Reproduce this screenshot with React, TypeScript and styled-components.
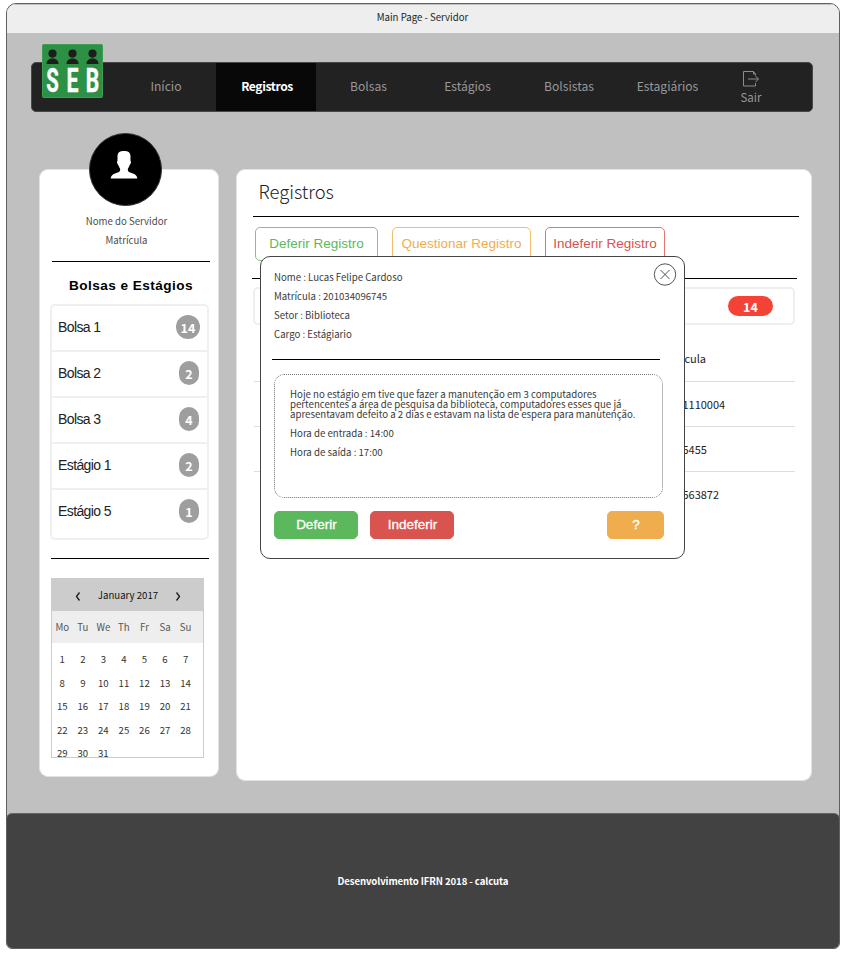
import React from "react";
import styled, { createGlobalStyle } from "styled-components";

const sans = `"Noto Sans CJK SC", "Noto Sans", sans-serif`;
const arial = `"Liberation Sans", Arial, sans-serif`;

const GlobalStyle = createGlobalStyle`
  *, *::before, *::after { box-sizing: border-box; }
  body { margin: 0; background: #fff; font-family: ${sans}; color: #333; }
  button { margin: 0; padding: 0; font: inherit; background: none; border: 0; }
`;

const Page = styled.div`
  width: 849px;
  height: 956px;
  padding: 3px 9px 0 6px;
  overflow: hidden;
`;

const Window = styled.div`
  width: 834px;
  height: 946px;
  display: flex;
  flex-direction: column;
  background: #c0c0c0;
  border: 1px solid #606060;
  border-radius: 10px 10px 6px 6px;
  overflow: hidden;
`;

const TitleBar = styled.header`
  flex: none;
  height: 29px;
  background: #eee;
  border-top: 1px solid #c4c4c4;
  text-align: center;
  font-size: 9.65px;
  line-height: 25px;
  color: #222;
  padding-right: 1px;
`;

const Navbar = styled.nav`
  flex: none;
  display: flex;
  width: 782px;
  height: 50px;
  margin: 29px 0 0 24px;
  background: #222;
  border: 1px solid #484848;
  border-radius: 5px;
`;

const Brand = styled.div`
  width: 84px;
  padding-left: 10px;

  svg { display: block; margin-top: -19px; }
`;

const NavItem = styled.a<{ $width: number; $active?: boolean }>`
  width: ${(p) => p.$width}px;
  height: 48px;
  padding-left: ${(p) => (p.$active ? 2 : 0)}px;
  line-height: 45px;
  text-align: center;
  font-size: 12.1px;
  letter-spacing: ${(p) => (p.$active ? "-0.4px" : "0")};
  font-weight: ${(p) => (p.$active ? 700 : 400)};
  color: ${(p) => (p.$active ? "#fff" : "#999")};
  background: ${(p) => (p.$active ? "#080808" : "transparent")};
`;

const Logout = styled.a`
  width: 80px;
  padding: 8px 0 0;
  display: flex;
  flex-direction: column;
  align-items: center;
  font-size: 11.5px;
  line-height: 19px;
  color: #999;
`;

const Columns = styled.main`
  flex: none;
  display: flex;
  align-items: flex-start;
  gap: 17px;
  height: 701px;
  padding: 57px 0 0 32px;
`;

const Sidebar = styled.aside`
  width: 180px;
  height: 608px;
  background: #fff;
  border: 1px solid #e2e2e2;
  border-radius: 9px;
  padding: 0 9px 0 11px;
`;

const Avatar = styled.div`
  width: 73px;
  height: 73px;
  margin: -37px 0 0 38px;
  border-radius: 50%;
  background: #000;
  border: 1px solid #333;

  svg { display: block; margin: 16px 0 0 20px; }
`;

const Profile = styled.div`
  height: 55px;
  padding: 6px 7px 0 0;
  text-align: center;
  font-size: 9.65px;
  line-height: 19px;
  color: #4a4a4a;
`;

const Rule = styled.hr<{ $width: number; $left?: number; $top?: number }>`
  width: ${(p) => p.$width}px;
  height: 1px;
  margin: ${(p) => p.$top ?? 0}px 0 0 ${(p) => p.$left ?? 0}px;
  border: 0;
  background: #000;
`;

const SideTitle = styled.h2`
  margin: 14px 0 9px;
  padding-left: 18px;
  font: bold 13.6px/19px ${arial};
  letter-spacing: 0.45px;
  color: #000;
  white-space: nowrap;
`;

const List = styled.ul`
  width: 159px;
  height: 236px;
  margin: 0 0 0 -1px;
  padding: 0;
  list-style: none;
  border: 2px solid #efefef;
  border-radius: 5px;
`;

const ListItem = styled.li`
  height: 46px;
  padding: 0 6px 2px;
  display: flex;
  align-items: center;
  justify-content: space-between;
  font: 14px/20px ${arial};
  letter-spacing: -0.6px;
  color: #222;

  &:first-child { height: 44px; }
  & + & { border-top: 2px solid #efefef; }
`;

const Count = styled.span<{ $wide?: boolean }>`
  width: ${(p) => (p.$wide ? 24 : 20)}px;
  height: 24px;
  margin-right: ${(p) => (p.$wide ? 1 : 2)}px;
  border-radius: 12px;
  background: #9e9e9e;
  color: #fff;
  text-align: center;
  font: bold 12.5px/25px ${sans};
  letter-spacing: 0;
`;

const Calendar = styled.section`
  width: 153px;
  height: 180px;
  margin-top: 19px;
  border: 1px solid #ccc;
  overflow: hidden;
  font-size: 9.65px;
`;

const MonthBar = styled.div`
  height: 32px;
  display: flex;
  align-items: center;
  padding: 2px 22px 0 23px;
  justify-content: space-between;
  background: #ccc;
  color: #111;

  span { margin-top: -2px; }
`;

const WeekRow = styled.div<{ $head?: boolean }>`
  height: ${(p) => (p.$head ? 32 : 23.5)}px;
  line-height: ${(p) => (p.$head ? 32 : 23.5)}px;
  display: grid;
  grid-template-columns: repeat(7, 20.55px);
  text-align: center;
  background: ${(p) => (p.$head ? "#eee" : "#fff")};
  color: ${(p) => (p.$head ? "#555" : "#333")};
`;

const Days = styled.div`
  padding-top: 5px;
`;

const Panel = styled.section`
  position: relative;
  width: 576px;
  height: 612px;
  background: #fff;
  border: 1px solid #e2e2e2;
  border-radius: 9px;
  padding-left: 16px;
`;

const PanelTitle = styled.h1`
  margin: 0;
  height: 46px;
  padding-left: 5.5px;
  font-size: 18.4px;
  font-weight: 300;
  line-height: 42px;
  color: #222;
`;

const Actions = styled.div`
  display: flex;
  gap: 14px;
  margin: 10px 0 0 2px;
`;

const OutlineButton = styled.button<{ $width: number; $color: string; $border: string }>`
  width: ${(p) => p.$width}px;
  height: 34px;
  border: 1px solid ${(p) => p.$border};
  border-radius: 5px;
  color: ${(p) => p.$color};
  font: 13.5px/30px ${arial};
  white-space: nowrap;
`;

const SummaryBar = styled.div`
  width: 542px;
  height: 38px;
  margin-top: 8px;
  padding: 8px 20px 0 0;
  display: flex;
  justify-content: flex-end;
  border: 2px solid #efefef;
  border-radius: 5px;
`;

const RedPill = styled.span`
  width: 45px;
  height: 20px;
  margin-top: -1px;
  border-radius: 10px;
  background: #f44336;
  color: #fff;
  text-align: center;
  font-size: 12.5px;
  font-weight: 700;
  line-height: 21px;
`;

const Records = styled.div`
  width: 541px;
  margin: 11px 0 0 1px;
`;

const Record = styled.div`
  height: 45px;
  padding-left: 404px;
  line-height: 44px;
  font-size: 11px;
  color: #222;

  &:first-child { line-height: 45px; }
  & + & { border-top: 1px solid #ddd; }
`;

const Modal = styled.div`
  position: absolute;
  left: 23px;
  top: 86px;
  width: 425px;
  height: 303px;
  padding: 11px 12px 0 11px;
  background: #fff;
  border: 1px solid #444;
  border-radius: 10px;
`;

const CloseButton = styled.button`
  position: absolute;
  right: 7px;
  top: 5px;
  width: 24px;
  height: 24px;

  svg { display: block; }
`;

const Details = styled.div`
  height: 91px;
  padding-left: 2px;
  font-size: 9.65px;
  line-height: 19px;
  color: #3a3a3a;
`;

const Note = styled.div`
  width: 389px;
  height: 124px;
  margin: 14px 0 0 2px;
  border: 1px dotted #777;
  border-radius: 10px;
  padding: 14px 0 0 15px;
  font-size: 9.67px;
  line-height: 10px;
  color: #3a3a3a;
  white-space: nowrap;

  p { margin: 0 0 9px; }
`;

const ModalActions = styled.div`
  display: flex;
  gap: 12px;
  margin: 13px 0 0 2.4px;
`;

const SolidButton = styled.button<{ $width: number; $color: string; $push?: boolean }>`
  width: ${(p) => p.$width}px;
  height: 28px;
  margin-left: ${(p) => (p.$push ? "141px" : "0")};
  border-radius: 5px;
  background: ${(p) => p.$color};
  border: 1px solid ${(p) => p.$color};
  color: #fff;
  font: 13.5px/26px ${arial};
  -webkit-text-stroke: 0.3px #fff;
`;

const Footer = styled.footer`
  flex: 1;
  margin: 0 -1px -1px;
  background: #424242;
  border: 1px solid #666;
  border-radius: 6px;
  text-align: center;
  font-size: 9.6px;
  font-weight: 700;
  letter-spacing: -0.1px;
  line-height: 134px;
  color: #fff;
`;

const Logo = () => (
  <svg width="61" height="54" viewBox="0 0 61 54">
    <rect x="0.5" y="0.5" width="60" height="53" rx="1" fill="#2c9145" stroke="#3f9d57" />
    {[10.5, 30.5, 50.5].map((x) => (
      <g key={x} fill="#1d1d1b">
        <circle cx={x} cy="9.600" r="4.100" />
        <path d={`M${x - 6} 20c0-4 3-5.500 6-5.500s6 1.500 6 5.500z`} />
      </g>
    ))}
    <g fill="#fff" stroke="#fff" strokeWidth="0.400" fontFamily="Roboto" fontWeight="700" fontSize="33.500">
      <text x="4.200" y="48" textLength="12.500" lengthAdjust="spacingAndGlyphs">S</text>
      <text x="24.600" y="48" textLength="12" lengthAdjust="spacingAndGlyphs">E</text>
      <text x="43.800" y="48" textLength="13.500" lengthAdjust="spacingAndGlyphs">B</text>
    </g>
  </svg>
);

const ExitIcon = () => (
  <svg width="17" height="17" viewBox="0 0 17 17" fill="none" stroke="#8c8c8c">
    <path d="M12.500 4.500V3L10.500 .5H0.500v14.500h12v-3M5 8h10.500M12.500 5l3 3-3 3M10.500 .5v2.500h2" />
  </svg>
);

const PersonIcon = () => (
  <svg width="28" height="30" viewBox="0 0 28 30">
    <path
      fill="#fff"
      d="M14 1c3.800 0 6.500 1.200 6.500 5.200v4.300c0 .8.800 1 .3 2.700-.4 1.400-1 1.300-1.400 2.500-.4 1.400-1.600 2.500-1.600 3.500 0 3.300 2.700 3.100 5.200 4.300 2.400 1.100 4.300 2.300 4.300 5H.7c0-2.700 1.900-3.900 4.300-5 2.500-1.200 5.200-1 5.200-4.300 0-1-1.200-2.100-1.600-3.500-.4-1.200-1-1.100-1.400-2.500-.5-1.700.3-1.900.3-2.700V6.200C7.500 2.200 10.200 1 14 1z"
    />
  </svg>
);

const Chevron = ({ d }: { d: string }) => (
  <svg width="6" height="9" viewBox="0 0 6 9" fill="none" stroke="#222" strokeWidth="1.400">
    <path d={d} />
  </svg>
);

const CloseIcon = () => (
  <svg width="24" height="24" viewBox="0 0 24 24" fill="none" stroke="#555">
    <circle cx="12" cy="12.500" r="10.700" />
    <path d="M7.500 8l9 9M16.500 8l-9 9" />
  </svg>
);

const navItems = [
  { label: "Início", width: 100 },
  { label: "Registros", width: 100, active: true },
  { label: "Bolsas", width: 105 },
  { label: "Estágios", width: 93 },
  { label: "Bolsistas", width: 110 },
  { label: "Estagiários", width: 87 },
];

const grants: [string, number][] = [
  ["Bolsa 1", 14],
  ["Bolsa 2", 2],
  ["Bolsa 3", 4],
  ["Estágio 1", 2],
  ["Estágio 5", 1],
];

const weekdays = ["Mo", "Tu", "We", "Th", "Fr", "Sa", "Su"];
const weeks = [0, 1, 2, 3, 4].map((w) =>
  [1, 2, 3, 4, 5, 6, 7].map((d) => w * 7 + d).filter((d) => d <= 31)
);

const records = ["Matrícula", "20111110004", "20155455", "2015563872"];

export default function App() {
  return (
    <Page>
      <GlobalStyle />
      <Window>
        <TitleBar>Main Page - Servidor</TitleBar>
        <Navbar>
          <Brand><Logo /></Brand>
          {navItems.map((n) => (
            <NavItem key={n.label} $width={n.width} $active={n.active}>{n.label}</NavItem>
          ))}
          <Logout><ExitIcon />Sair</Logout>
        </Navbar>
        <Columns>
          <Sidebar>
            <Avatar><PersonIcon /></Avatar>
            <Profile>
              <div>Nome do Servidor</div>
              <div>Matrícula</div>
            </Profile>
            <Rule $width={158} $left={1} />
            <SideTitle>Bolsas e Estágios</SideTitle>
            <List>
              {grants.map(([label, count]) => (
                <ListItem key={label}>
                  {label}
                  <Count $wide={count > 9}>{count}</Count>
                </ListItem>
              ))}
            </List>
            <Rule $width={158} $top={18} />
            <Calendar>
              <MonthBar>
                <Chevron d="M4.500 .5L1.500 4.500l3 4" />
                <span>January 2017</span>
                <Chevron d="M1.500 .5l3 4-3 4" />
              </MonthBar>
              <WeekRow $head>{weekdays.map((d) => <span key={d}>{d}</span>)}</WeekRow>
              <Days>
                {weeks.map((w) => (
                  <WeekRow key={w[0]}>{w.map((d) => <span key={d}>{d}</span>)}</WeekRow>
                ))}
              </Days>
            </Calendar>
          </Sidebar>
          <Panel>
            <PanelTitle>Registros</PanelTitle>
            <Rule $width={546} />
            <Actions>
              <OutlineButton $width={123} $color="#5cb85c" $border="#7cc87c">Deferir Registro</OutlineButton>
              <OutlineButton $width={139} $color="#f0ad4e" $border="#f3bc6c">Questionar Registro</OutlineButton>
              <OutlineButton $width={120} $color="#d9534f" $border="#e27572">Indeferir Registro</OutlineButton>
            </Actions>
            <Rule $width={545} $left={-1} $top={17} />
            <SummaryBar><RedPill>14</RedPill></SummaryBar>
            <Records>
              {records.map((r) => <Record key={r}>{r}</Record>)}
            </Records>
            <Modal>
              <CloseButton aria-label="Fechar"><CloseIcon /></CloseButton>
              <Details>
                <div>Nome : Lucas Felipe Cardoso</div>
                <div>Matrícula : 201034096745</div>
                <div>Setor : Biblioteca</div>
                <div>Cargo : Estágiario</div>
              </Details>
              <Rule $width={388} />
              <Note>
                <p>
                  Hoje no estágio em tive que fazer a manutenção em 3 computadores<br />
                  pertencentes a área de pesquisa da biblioteca, computadores esses que já<br />
                  apresentavam defeito a 2 dias e estavam na lista de espera para manutenção.
                </p>
                <p>Hora de entrada : 14:00</p>
                <p>Hora de saída : 17:00</p>
              </Note>
              <ModalActions>
                <SolidButton $width={84} $color="#5cb85c">Deferir</SolidButton>
                <SolidButton $width={84} $color="#d9534f">Indeferir</SolidButton>
                <SolidButton $width={57} $color="#f0ad4e" $push>?</SolidButton>
              </ModalActions>
            </Modal>
          </Panel>
        </Columns>
        <Footer>Desenvolvimento IFRN 2018 - calcuta</Footer>
      </Window>
    </Page>
  );
}
